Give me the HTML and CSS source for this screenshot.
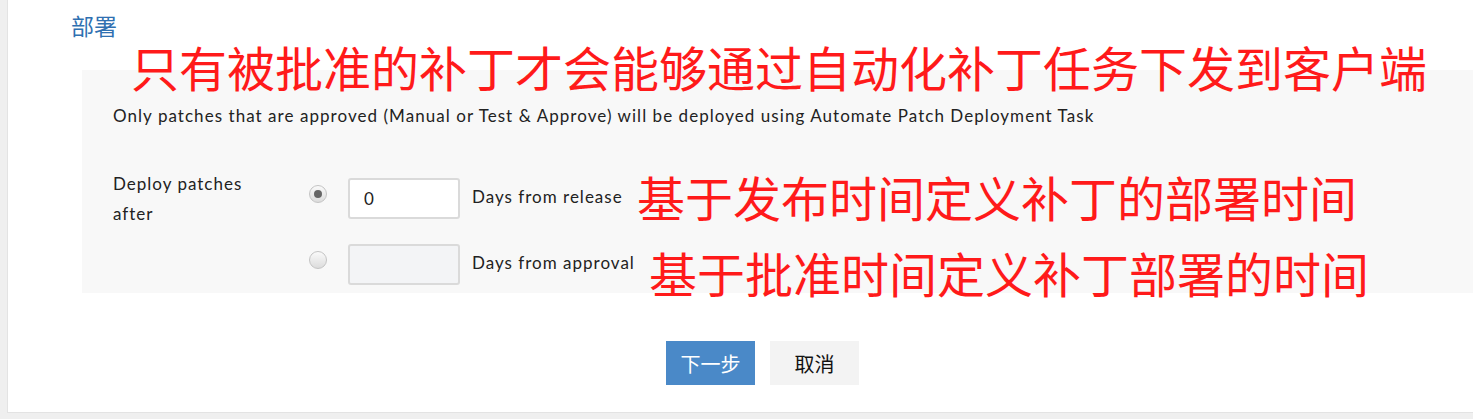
FILE: index.html
```html
<!DOCTYPE html>
<html lang="zh">
<head>
<meta charset="utf-8">
<link rel="stylesheet" href="styles.css">
</head>
<body>
<div class="card">
  <h2 class="title">部署</h2>
  <div class="panel">
    <p class="note">Only patches that are approved (Manual or Test &amp; Approve) will be deployed using Automate Patch Deployment Task</p>
    <div class="form-row">
      <div class="label">Deploy patches<br>after</div>
      <div class="options">
        <div class="option">
          <input type="radio" class="radio" name="d" checked>
          <input type="text" class="days" value="0">
          <span class="opt-text">Days from release</span>
        </div>
        <div class="option">
          <input type="radio" class="radio" name="d">
          <input type="text" class="days disabled" value="" disabled>
          <span class="opt-text">Days from approval</span>
        </div>
      </div>
    </div>
  </div>
  <div class="actions">
    <button class="btn primary">下一步</button>
    <button class="btn secondary">取消</button>
  </div>
  <div class="anno anno-1">只有被批准的补丁才会能够通过自动化补丁任务下发到客户端</div>
  <div class="anno anno-2">基于发布时间定义补丁的部署时间</div>
  <div class="anno anno-3">基于批准时间定义补丁部署的时间</div>
</div>
</body>
</html>
```

FILE: styles.css
```css
html, body {
  margin: 0;
  padding: 0;
}
body {
  background: #efefef;
  font-family: Lato, "Noto Sans", "Noto Sans CJK SC", sans-serif;
  color: #222;
  width: 1473px;
  height: 419px;
  overflow: hidden;
}
.card {
  position: relative;
  margin-left: 7px;
  height: 413px;
  background: #fff;
  border-left: 1px solid #e3e3e3;
  border-bottom: 1px solid #e3e3e3;
  box-sizing: border-box;
  padding-top: 10px;
}
.title {
  margin: 0 0 0 63px;
  font-family: "Noto Sans CJK SC", sans-serif;
  font-weight: normal;
  font-size: 23px;
  line-height: 31px;
  color: #2f70b1;
}
.panel {
  margin: 29px 0 0 74px;
  height: 223px;
  background: #f8f8f8;
  padding: 34px 0 0 31px;
  box-sizing: border-box;
}
.note {
  margin: 0;
  font-size: 17px;
  letter-spacing: 1.05px;
  line-height: 24px;
  color: #222;
}
.form-row {
  display: flex;
  margin-top: 50px;
}
.label {
  width: 196px;
  font-size: 17px;
  letter-spacing: 1px;
  line-height: 30px;
  color: #222;
  margin-top: -9px;
}
.options {
  display: flex;
  flex-direction: column;
  gap: 25px;
}
.option {
  display: flex;
  align-items: center;
  height: 41px;
}
.radio {
  appearance: none;
  -webkit-appearance: none;
  margin: 0 0 9px 0;
  width: 18px;
  height: 18px;
  border-radius: 50%;
  border: 1px solid #c4c4c4;
  background: linear-gradient(#fafafa, #dcdcdc);
  box-sizing: border-box;
  position: relative;
}
.radio:checked::after {
  content: "";
  position: absolute;
  left: 4px;
  top: 4px;
  width: 8px;
  height: 8px;
  border-radius: 50%;
  background: #666;
}
.days {
  margin-left: 21px;
  width: 112px;
  height: 41px;
  box-sizing: border-box;
  border: 2px solid #dadada;
  border-radius: 3px;
  background: #fff;
  padding: 0 0 0 14px;
  font-family: Lato, sans-serif;
  font-size: 17px;
  color: #222;
  outline: none;
}
.days.disabled {
  background: #f3f4f6;
}
.opt-text {
  margin-left: 12px;
  font-size: 17px;
  letter-spacing: 1px;
  color: #222;
  margin-top: -4px;
}
.actions {
  display: flex;
  gap: 15px;
  margin: 48px 0 0 658px;
}
.btn {
  width: 89px;
  height: 44px;
  border: none;
  font-family: "Noto Sans CJK SC", sans-serif;
  font-size: 20px;
  padding: 0;
  cursor: pointer;
}
.primary {
  background: #4a89c8;
  color: #fff;
}
.secondary {
  background: #f3f3f3;
  color: #111;
}
.anno {
  position: absolute;
  font-family: "Noto Sans CJK SC", sans-serif;
  color: #ff1a1a;
  font-size: 48px;
  line-height: 48px;
  white-space: nowrap;
}
.anno-1 {
  left: 123px;
  top: 42px;
}
.anno-2 {
  left: 629px;
  top: 172px;
}
.anno-3 {
  left: 641px;
  top: 248px;
}
```
